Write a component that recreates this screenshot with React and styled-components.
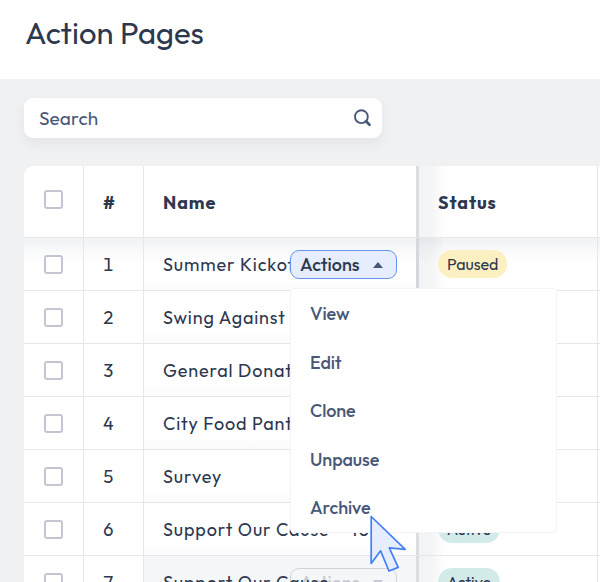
import styled, { createGlobalStyle } from 'styled-components'

const rows = [
  { id: 1, name: 'Summer Kickoff', status: 'Paused' },
  { id: 2, name: 'Swing Against', status: 'Active' },
  { id: 3, name: 'General Donation', status: 'Active' },
  { id: 4, name: 'City Food Pantry', status: 'Active' },
  { id: 5, name: 'Survey', status: 'Active' },
  { id: 6, name: 'Support Our Cause – Tor', status: 'Active' },
  { id: 7, name: 'Support Our Cause', status: 'Active' },
]

const menuItems = ['View', 'Edit', 'Clone', 'Unpause', 'Archive']

const App = () => {
  return (
    <>
      <GlobalStyle />
      <Page>
        <Header>
          <h1>Action Pages</h1>
        </Header>
        <Main>
          <SearchBox>
            <span>Search</span>
            <SearchIcon />
          </SearchBox>
          <Table>
            <HeadRow>
              <CheckCell>
                <Checkbox />
              </CheckCell>
              <NumberCell>#</NumberCell>
              <NameCell>Name</NameCell>
              <StatusCell>Status</StatusCell>
              <div />
            </HeadRow>
            {rows.map((row) => (
              <Row key={row.id} $first={row.id === 1}>
                <CheckCell>
                  <Checkbox />
                </CheckCell>
                <NumberCell>{row.id}</NumberCell>
                <NameCell
                  $body
                  $hovered={row.id === 7}
                  $first={row.id === 1}
                >
                  <Name $front={row.id === 7}>{row.name}</Name>
                  {row.id === 1 && (
                    <ActionsButton $open>
                      Actions
                      <Caret $open />
                    </ActionsButton>
                  )}
                  {row.id === 7 && (
                    <ActionsButton>
                      Actions
                      <Caret />
                    </ActionsButton>
                  )}
                  {row.id === 1 && (
                    <Menu>
                      {menuItems.map((item) => (
                        <li key={item}>{item}</li>
                      ))}
                    </Menu>
                  )}
                </NameCell>
                <StatusCell>
                  <Badge $paused={row.status === 'Paused'}>{row.status}</Badge>
                </StatusCell>
                <div />
              </Row>
            ))}
          </Table>
        </Main>
        <Pointer />
      </Page>
    </>
  )
}

export default App

const SearchIcon = () => (
  <svg width='18' height='18' viewBox='0 0 18 18' fill='none' stroke='#4a5878'>
    <circle cx='7.4' cy='7.7' r='6.4' strokeWidth='1.9' />
    <path d='M12 12.3L15.5 15.8' strokeWidth='2.8' strokeLinecap='round' />
  </svg>
)

const Pointer = () => (
  <PointerSvg viewBox='0 0 40 60'>
    <path
      d='M2.2 2.5L36.2 35.3L20.3 33.8L29.2 53.4L20 57L11.6 36.8L2.2 49.4Z'
      fill='#e6edff'
      stroke='#4480f5'
      strokeWidth='1.7'
      strokeLinejoin='round'
    />
  </PointerSvg>
)

// style
const GlobalStyle = createGlobalStyle`
  * {
    box-sizing: border-box;
  }
  body {
    margin: 0;
    color: #2d384f;
    background: #f0f1f3;
    font-family: 'Outfit', 'Lato', sans-serif;
    font-variant-numeric: tabular-nums;
    overflow: hidden;
  }
`

const Page = styled.div`
  position: relative;
  height: 582px;
  overflow: hidden;
`

const Header = styled.header`
  height: 79px;
  padding: 13px 25px;
  background: #fff;
  h1 {
    margin: 0;
    font-size: 31px;
    font-weight: 400;
    line-height: 40px;
  }
`

const Main = styled.main`
  padding: 19px 0 0 24px;
`

const SearchBox = styled.div`
  display: flex;
  align-items: center;
  justify-content: space-between;
  width: 358px;
  height: 40px;
  padding: 0 10px 0 15px;
  border-radius: 9px;
  background: #fff;
  box-shadow: 0 5px 12px rgba(45, 56, 79, 0.07);
  color: #4a5878;
  font-size: 19px;
  letter-spacing: 0.1px;
`

const Table = styled.div`
  width: 620px;
  margin-top: 28px;
  border-radius: 10px 0 0 0;
  background: #fff;
`

const Row = styled.div`
  display: grid;
  grid-template-columns: 60px 60px 275px 179px 1fr;
  height: 53px;
  border-bottom: 1px solid #e6e7eb;
  background: ${(props) =>
    props.$first
      ? 'linear-gradient(180deg, #f0f1f3 0, #f8f9fa 12px, #fff 26px)'
      : '#fff'};
  > div {
    display: flex;
    align-items: center;
  }
`

const HeadRow = styled(Row)`
  height: 72px;
  border-radius: 10px 0 0 0;
  font-size: 18px;
  font-weight: 700;
  letter-spacing: 0.9px;
`

const CheckCell = styled.div`
  justify-content: center;
  border-right: 1px solid #e6e7eb;
  ${HeadRow} & {
    padding-bottom: 5px;
  }
`

const Checkbox = styled.span`
  width: 19px;
  height: 19px;
  border: 2px solid #c3c6d1;
  border-radius: 3px;
  background: #fff;
`

const NumberCell = styled.div`
  padding: 1px 0 0 19px;
  border-right: 1px solid #e6e7eb;
  font-size: 18px;
`

const NameCell = styled.div`
  position: relative;
  padding: 1px 0 0 19px;
  border-right: 3px solid ${(props) => (props.$first ? '#d5d7df' : '#dcdde2')};
  background: ${(props) => {
    if (props.$hovered) return '#f5f6f8'
    return props.$body
      ? 'linear-gradient(180deg, transparent 38px, rgba(45, 56, 79, 0.018))'
      : 'transparent'
  }};
`

const Name = styled.span`
  position: relative;
  z-index: ${(props) => (props.$front ? 1 : 0)};
  white-space: nowrap;
  font-size: 18px;
  font-weight: 400;
  letter-spacing: 0.85px;
`

const StatusCell = styled.div`
  padding: 1px 0 0 19px;
  border-right: 1px solid #e6e7eb;
  background: linear-gradient(
    90deg,
    rgba(45, 56, 79, 0.06) 0,
    rgba(45, 56, 79, 0.05) 12px,
    transparent 26px
  );
`

const Badge = styled.span`
  height: 28px;
  margin-top: -1px;
  padding: 0 9px;
  border-radius: 14px;
  background: ${(props) => (props.$paused ? '#fcf0c3' : '#d2ebe9')};
  font-size: 16px;
  line-height: 28px;
  letter-spacing: -0.05px;
`

// sits over the end of the page name
const ActionsButton = styled.button`
  position: absolute;
  top: 12px;
  right: 19px;
  display: flex;
  align-items: center;
  justify-content: space-between;
  width: 107px;
  height: 29px;
  padding: 0 13px 0 9px;
  border: 1px solid ${(props) => (props.$open ? '#6794ef' : '#d0d3db')};
  border-radius: 9px;
  background: ${(props) => (props.$open ? '#e6edfd' : 'transparent')};
  color: ${(props) => (props.$open ? '#2d384f' : '#c8cbd3')};
  font: inherit;
  font-size: 18px;
  font-weight: 500;
`

const Caret = styled.span`
  border: 5px solid transparent;
  border-top-width: 0;
  border-bottom: 6px solid ${(props) => (props.$open ? '#4a5878' : '#c8cbd3')};
  transform: ${(props) => (props.$open ? 'none' : 'rotate(180deg)')};
`

const Menu = styled.ul`
  position: absolute;
  z-index: 2;
  top: 50px;
  left: 146px;
  width: 267px;
  height: 245px;
  margin: 0;
  padding: 1px 19px 0;
  border: 1px solid #f3f4f6;
  border-radius: 4px;
  background: #fff;
  color: #4a5878;
  list-style: none;
  font-size: 18px;
  font-weight: 500;
  line-height: 48.6px;
  letter-spacing: -0.1px;
`

const PointerSvg = styled.svg`
  position: absolute;
  z-index: 3;
  top: 514px;
  left: 369px;
  width: 40px;
  height: 60px;
`
